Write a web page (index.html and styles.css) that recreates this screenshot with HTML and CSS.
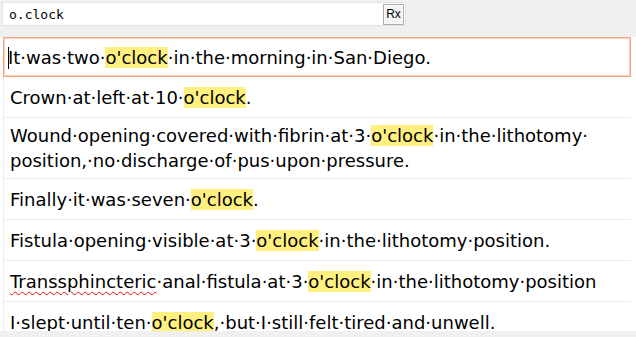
FILE: index.html
```html
<!DOCTYPE html>
<html>
<head>
<meta charset="utf-8">
<link rel="stylesheet" href="styles.css">
</head>
<body>
<div class="app">
  <div class="search">
    <span class="query">o.clock</span>
    <span class="rx">Rx</span>
  </div>
  <div class="list">
    <div class="rows">
      <div class="row selected"><div class="text"><span class="caret"></span>It·was·two·<mark>o'clock</mark>·in·the·morning·in·San·Diego.</div></div>
      <div class="row"><div class="text">Crown·at·left·at·10·<mark>o'clock</mark>.</div></div>
      <div class="row"><div class="text">Wound·opening·covered·with·fibrin·at·3·<mark>o'clock</mark>·in·the·lithotomy·<br>position,·no·discharge·of·pus·upon·pressure.</div></div>
      <div class="row"><div class="text">Finally·it·was·seven·<mark>o'clock</mark>.</div></div>
      <div class="row"><div class="text">Fistula·opening·visible·at·3·<mark>o'clock</mark>·in·the·lithotomy·position.</div></div>
      <div class="row"><div class="text"><span class="misspelled">Transsphincteric</span>·anal·fistula·at·3·<mark>o'clock</mark>·in·the·lithotomy·position</div></div>
      <div class="row"><div class="text">I·slept·until·ten·<mark>o'clock</mark>,·but·I·still·felt·tired·and·unwell.</div></div>
    </div>
  </div>
</div>
</body>
</html>
```
FILE: styles.css
```css
html, body {
  margin: 0;
  padding: 0;
  background: #f0f0f0;
  width: 636px;
  height: 337px;
  overflow: hidden;
}

.app {
  display: flex;
  flex-direction: column;
}

.search {
  box-sizing: border-box;
  width: 404px;
  height: 24px;
  margin: 2px 0 0 2px;
  background: #ffffff;
  border: 1px solid #e4e4e4;
  display: flex;
  align-items: center;
  justify-content: space-between;
  padding: 0 1px 0 6px;
}

.query {
  font-family: "DejaVu Sans Mono", "Liberation Mono", monospace;
  font-size: 13px;
  color: #000;
}

.rx {
  box-sizing: border-box;
  width: 21px;
  height: 21px;
  border: 1px solid #adadad;
  box-shadow: inset 0 0 0 1px #fbfbfb;
  background: #f4f4f4;
  display: flex;
  align-items: center;
  justify-content: center;
  font-family: "Liberation Sans", Arial, sans-serif;
  font-size: 12px;
  color: #000;
}

.list {
  margin-top: 11px;
  height: 294px;
  background: #ffffff;
  overflow: hidden;
  padding-left: 3px;
}

.rows {
  width: 628px;
  border-left: 1px solid #ededed;
  box-sizing: border-box;
}

.row {
  box-sizing: border-box;
  display: flex;
  align-items: center;
  min-height: 41px;
  padding: 5px 6px;
  border-bottom: 1px solid #ececec;
  font-family: "DejaVu Sans", Verdana, sans-serif;
  font-size: 18px;
  line-height: 25px;
  color: #000;
}

.row.selected {
  min-height: 40px;
  padding: 2px 4px;
  border: 1px solid #f8a47e;
  box-shadow: inset 0 0 0 1px #fcd0b9;
  margin-left: -1px;
}

.text {
  white-space: nowrap;
}

mark {
  background: #fff080;
  color: #000;
}

.caret {
  display: inline-block;
  width: 1px;
  height: 22px;
  background: #000;
  vertical-align: -5px;
  margin-right: -1px;
}

.misspelled {
  text-decoration: underline wavy #e01010;
  text-decoration-thickness: 1px;
  text-underline-offset: 3px;
}
```
